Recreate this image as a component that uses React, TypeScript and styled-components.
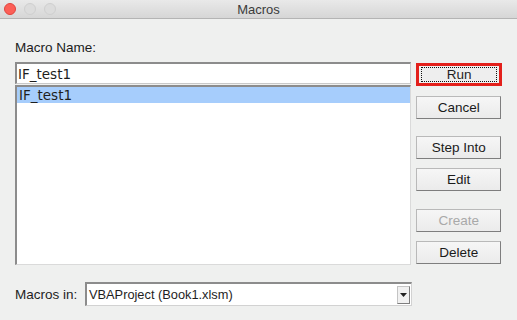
import styled, { createGlobalStyle } from 'styled-components';

const Global = createGlobalStyle`
html, body {
  margin: 0;
  padding: 0;
  background: #eff0ef;
}
body {
  font-family: "Liberation Sans", Arial, sans-serif;
  font-size: 13px;
  color: #1e1e1e;
}
`

const Window = styled.div`
width: 517px;
height: 320px;
display: flex;
flex-direction: column;
background: #eff0ef;
overflow: hidden;
`
const TitleBar = styled.div`
height: 18px;
display: flex;
align-items: center;
position: relative;
background: linear-gradient(#e9e9e9, #d6d6d6);
border-bottom: 1px solid #b4b4b4;
`
const Lights = styled.div`
display: flex;
gap: 8px;
padding-left: 4px;
`
const Light = styled.div<{ $red?: boolean }>`
width: 12px;
height: 12px;
border-radius: 50%;
box-sizing: border-box;
background: ${p => (p.$red ? '#fc5f57' : '#dcdcdc')};
border: 1px solid ${p => (p.$red ? '#e0443e' : '#cfcfcf')};
`
const Title = styled.div`
position: absolute;
left: 0;
right: 0;
text-align: center;
font-size: 13px;
color: #3b3b3b;
pointer-events: none;
`
const Body = styled.div`
padding: 0 15px;
display: flex;
flex-direction: column;
`
const Label = styled.div`
font-size: 13.5px;
color: #1c1c1c;
margin-top: 21px;
height: 16px;
line-height: 16px;
`
const Main = styled.div`
display: flex;
gap: 5px;
margin-top: 6px;
`
const Left = styled.div`
width: 397px;
display: flex;
flex-direction: column;
`
const Field = styled.div`
height: 22px;
box-sizing: border-box;
background: #fff;
border: 1px solid #c9c9c9;
border-top: 2px solid #8c8c8c;
border-left: 2px solid #8c8c8c;
padding-left: 1px;
line-height: 20px;
font-family: "DejaVu Sans", sans-serif;
font-size: 13.5px;
`
const List = styled.div`
margin-top: 1px;
height: 180px;
box-sizing: border-box;
background: #fff;
border: 1px solid #dadada;
border-top: 2px solid #8c8c8c;
border-left: 2px solid #8c8c8c;
`
const Row = styled.div<{ $sel?: boolean }>`
height: 16px;
line-height: 16px;
padding-left: 2px;
font-family: "DejaVu Sans", sans-serif;
font-size: 13.5px;
background: ${p => (p.$sel ? '#a6cdfc' : 'transparent')};
`
const Buttons = styled.div`
width: 86px;
display: flex;
flex-direction: column;
`
const Focus = styled.div`
margin-top: 1px;
height: 23px;
box-sizing: border-box;
border: 3px solid #e3201b;
padding: 1px 2px;
display: flex;
`
const Inner = styled.div`
flex: 1;
border: 1px dotted #111;
display: flex;
align-items: center;
justify-content: center;
font-size: 13.5px;
background: #eeeeee;
`
const Button = styled.div<{ $top: number; $off?: boolean }>`
margin-top: ${p => p.$top}px;
height: 23px;
width: 85px;
box-sizing: border-box;
border: 1px solid #b9b9b9;
border-right-color: #7e7e7e;
border-bottom-color: #7e7e7e;
background: linear-gradient(#f6f6f6, #ebebeb);
display: flex;
align-items: center;
justify-content: center;
font-size: 13.5px;
color: ${p => (p.$off ? '#a9a9a9' : '#1a1a1a')};
`
const Bottom = styled.div`
display: flex;
align-items: center;
margin-top: 17px;
`
const BottomLabel = styled.div`
width: 70px;
font-size: 13.5px;
`
const Select = styled.div`
width: 327px;
height: 24px;
box-sizing: border-box;
background: #fff;
border: 1px solid #d2d2d2;
border-top: 2px solid #8c8c8c;
border-left: 2px solid #8c8c8c;
display: flex;
align-items: center;
justify-content: space-between;
padding-left: 2px;
padding-right: 1px;
font-size: 12.8px;
`
const Arrow = styled.div`
width: 13px;
height: 18px;
box-sizing: border-box;
border: 1px solid #c4c4c4;
border-right-color: #7e7e7e;
border-bottom-color: #7e7e7e;
background: #f1f1f1;
display: flex;
align-items: center;
justify-content: center;
`

export default function App() {
  return (
    <Window>
      <Global />
      <TitleBar>
        <Lights>
          <Light $red />
          <Light />
          <Light />
        </Lights>
        <Title>Macros</Title>
      </TitleBar>
      <Body>
        <Label>Macro Name:</Label>
        <Main>
          <Left>
            <Field>IF_test1</Field>
            <List>
              <Row $sel>IF_test1</Row>
            </List>
          </Left>
          <Buttons>
            <Focus>
              <Inner>Run</Inner>
            </Focus>
            <Button $top={10}>Cancel</Button>
            <Button $top={17}>Step Into</Button>
            <Button $top={9}>Edit</Button>
            <Button $top={18} $off>Create</Button>
            <Button $top={9}>Delete</Button>
          </Buttons>
        </Main>
        <Bottom>
          <BottomLabel>Macros in:</BottomLabel>
          <Select>
            <span>VBAProject (Book1.xlsm)</span>
            <Arrow>
              <svg width="7" height="4" viewBox="0 0 7 4">
                <path d="M0 0 H7 L3.5 4 Z" fill="#222" />
              </svg>
            </Arrow>
          </Select>
        </Bottom>
      </Body>
    </Window>
  );
}
